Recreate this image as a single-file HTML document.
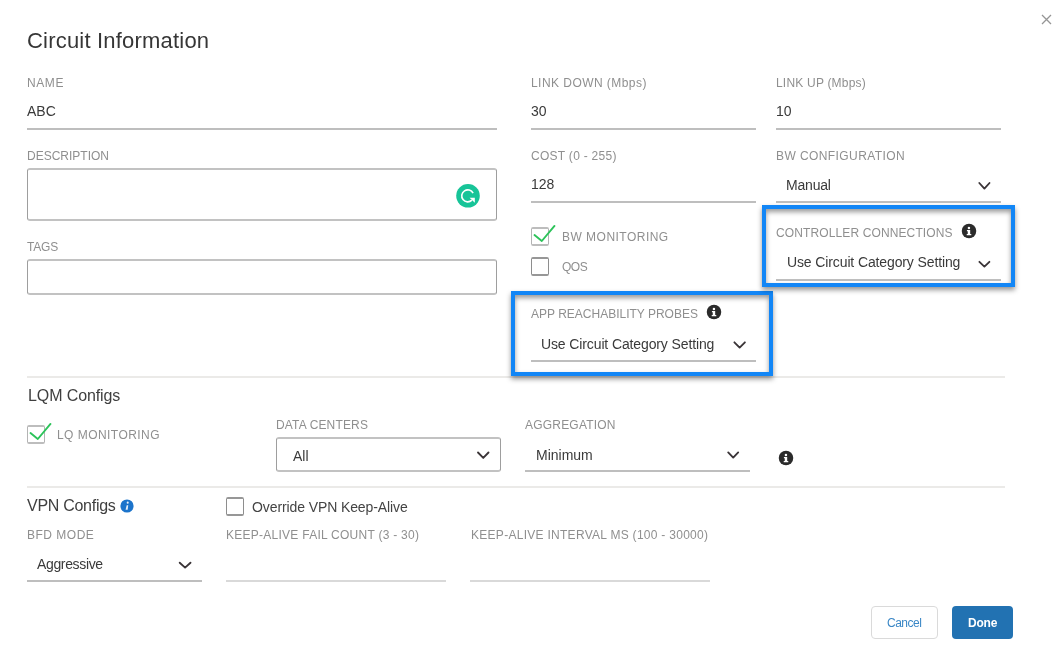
<!DOCTYPE html>
<html><head><meta charset="utf-8"><style>
html,body{margin:0;padding:0;background:#fff;width:1063px;height:657px;overflow:hidden}
body{position:relative;font-family:"Liberation Sans", sans-serif}
.t{position:absolute;white-space:pre;will-change:transform}
.r{position:absolute}
</style></head><body>
<svg class="r" style="left:1041px;top:13.5px" width="11" height="11" viewBox="0 0 11 11"><path d="M1 1 L10 10 M10 1 L1 10" stroke="#959595" stroke-width="1.3"/></svg>
<div class="t" style="left:27px;top:30px;font-size:22px;line-height:22px;color:#363636;letter-spacing:0.2px;font-weight:400;">Circuit Information</div>
<div class="t" style="left:27px;top:77px;font-size:12px;line-height:12px;color:#8f8f8f;letter-spacing:0.6px;font-weight:400;">NAME</div>
<div class="t" style="left:27px;top:104px;font-size:14px;line-height:14px;color:#3a3a3a;letter-spacing:0px;font-weight:400;">ABC</div>
<div class="r" style="left:27px;top:128px;width:470px;height:2px;background:#bebebe"></div>
<div class="t" style="left:27px;top:150px;font-size:12px;line-height:12px;color:#8f8f8f;letter-spacing:0px;font-weight:400;">DESCRIPTION</div>
<div class="r" style="left:27px;top:168px;width:470px;height:53px;border:1px solid #9e9e9e;border-top:2px solid #c2c2c2;border-bottom:2px solid #c2c2c2;border-radius:3px;box-sizing:border-box"></div>
<svg class="r" style="left:456px;top:184.2px" width="24" height="24" viewBox="0 0 24 24"><circle cx="12" cy="11.8" r="11.8" fill="#17c498"/><path d="M17.1 9.2 A6.0 6.0 0 1 0 15.9 16.2" fill="none" stroke="#fff" stroke-width="1.6"/><path d="M13.6 13.7 H18.8 V18.7 Z" fill="#fff"/></svg>
<div class="t" style="left:27px;top:241px;font-size:12px;line-height:12px;color:#8f8f8f;letter-spacing:-0.2px;font-weight:400;">TAGS</div>
<div class="r" style="left:27px;top:259px;width:470px;height:36px;border:1px solid #9e9e9e;border-top:2px solid #c2c2c2;border-bottom:2px solid #c2c2c2;border-radius:3px;box-sizing:border-box"></div>
<div class="t" style="left:531px;top:77px;font-size:12px;line-height:12px;color:#8f8f8f;letter-spacing:0.45px;font-weight:400;">LINK DOWN (Mbps)</div>
<div class="t" style="left:531px;top:104px;font-size:14px;line-height:14px;color:#3a3a3a;letter-spacing:0px;font-weight:400;">30</div>
<div class="r" style="left:531px;top:128px;width:225px;height:2px;background:#bebebe"></div>
<div class="t" style="left:776px;top:77px;font-size:12px;line-height:12px;color:#8f8f8f;letter-spacing:0.2px;font-weight:400;">LINK UP (Mbps)</div>
<div class="t" style="left:776px;top:104px;font-size:14px;line-height:14px;color:#3a3a3a;letter-spacing:0px;font-weight:400;">10</div>
<div class="r" style="left:776px;top:128px;width:225px;height:2px;background:#bebebe"></div>
<div class="t" style="left:531px;top:150px;font-size:12px;line-height:12px;color:#8f8f8f;letter-spacing:0.28px;font-weight:400;">COST (0 - 255)</div>
<div class="t" style="left:531px;top:177px;font-size:14px;line-height:14px;color:#3a3a3a;letter-spacing:0px;font-weight:400;">128</div>
<div class="r" style="left:531px;top:201px;width:225px;height:2px;background:#bebebe"></div>
<div class="t" style="left:776px;top:150px;font-size:12px;line-height:12px;color:#8f8f8f;letter-spacing:0.42px;font-weight:400;">BW CONFIGURATION</div>
<div class="t" style="left:786px;top:178px;font-size:14px;line-height:14px;color:#3a3a3a;letter-spacing:-0.2px;font-weight:400;">Manual</div>
<svg class="r" style="left:0;top:0" width="1063" height="657" viewBox="0 0 1063 657"><polyline points="979.3,183 984.4,188.6 989.5,183" fill="none" stroke="#3a3437" stroke-width="1.85" stroke-linecap="round" stroke-linejoin="round"/></svg>
<div class="r" style="left:776px;top:201px;width:225px;height:2px;background:#bebebe"></div>
<div class="r" style="left:531px;top:227px;width:18px;height:19px;border:1px solid #b4b4b4;border-top:2px solid #bdbdbd;border-bottom:2px solid #bdbdbd;border-radius:2px;box-sizing:border-box"></div>
<svg class="r" style="left:531px;top:223px" width="26" height="22" viewBox="0 0 26 22"><polyline points="3.5,12.1 10.8,18.0 23.5,2.9" fill="none" stroke="#2cc35a" stroke-width="1.9" stroke-linecap="round" stroke-linejoin="round"/></svg>
<div class="t" style="left:562px;top:231px;font-size:12px;line-height:12px;color:#8f8f8f;letter-spacing:0.48px;font-weight:400;">BW MONITORING</div>
<div class="r" style="left:531px;top:257px;width:18px;height:19px;border:1px solid #8e8e8e;border-top:2px solid #979797;border-bottom:2px solid #979797;border-radius:2px;box-sizing:border-box"></div>
<div class="t" style="left:562px;top:261px;font-size:12px;line-height:12px;color:#8f8f8f;letter-spacing:-0.5px;font-weight:400;">QOS</div>
<div class="r" style="left:762px;top:205px;width:253px;height:82px;border:4px solid #1286f6;box-sizing:border-box;box-shadow:0 3px 5px rgba(0,0,0,.42), inset 0 3px 5px rgba(0,0,0,.4);z-index:3"></div>
<div class="t" style="left:776px;top:227px;font-size:12px;line-height:12px;color:#8f8f8f;letter-spacing:0.12px;font-weight:400;">CONTROLLER CONNECTIONS</div>
<svg class="r" style="left:959.3px;top:221.2px;overflow:visible" width="20" height="20" viewBox="0 0 20 20"><circle cx="10" cy="10" r="7.25" fill="#2b2b2b"/><g transform="translate(2.75 2.75) scale(1.0357142857142858)"><circle cx="6.95" cy="4.05" r="1.2" fill="#fff"/><path d="M5.0 6.1 H8.15 V9.9 H9.2 V11.2 H4.8 V9.9 H5.8 V7.3 H5.0 Z" fill="#fff"/></g></svg>
<div class="t" style="left:786.5px;top:255px;font-size:14px;line-height:14px;color:#3a3a3a;letter-spacing:-0.12px;font-weight:400;">Use Circuit Category Setting</div>
<svg class="r" style="left:0;top:0" width="1063" height="657" viewBox="0 0 1063 657"><polyline points="979.4,261.8 984.4,266.6 989.4,261.8" fill="none" stroke="#3a3437" stroke-width="1.85" stroke-linecap="round" stroke-linejoin="round"/></svg>
<div class="r" style="left:776px;top:279px;width:225px;height:2px;background:#bebebe"></div>
<div class="r" style="left:511px;top:291px;width:262px;height:85px;border:4px solid #1286f6;box-sizing:border-box;box-shadow:0 3px 5px rgba(0,0,0,.42), inset 0 3px 5px rgba(0,0,0,.4);z-index:2"></div>
<div class="t" style="left:531px;top:308px;font-size:12px;line-height:12px;color:#8f8f8f;letter-spacing:0px;font-weight:400;">APP REACHABILITY PROBES</div>
<svg class="r" style="left:704.3px;top:302.2px;overflow:visible" width="20" height="20" viewBox="0 0 20 20"><circle cx="10" cy="10" r="7.25" fill="#2b2b2b"/><g transform="translate(2.75 2.75) scale(1.0357142857142858)"><circle cx="6.95" cy="4.05" r="1.2" fill="#fff"/><path d="M5.0 6.1 H8.15 V9.9 H9.2 V11.2 H4.8 V9.9 H5.8 V7.3 H5.0 Z" fill="#fff"/></g></svg>
<div class="t" style="left:541.4px;top:337px;font-size:14px;line-height:14px;color:#3a3a3a;letter-spacing:-0.12px;font-weight:400;">Use Circuit Category Setting</div>
<svg class="r" style="left:0;top:0" width="1063" height="657" viewBox="0 0 1063 657"><polyline points="734.4,342.3 739.65,347.6 744.9,342.3" fill="none" stroke="#3a3437" stroke-width="1.85" stroke-linecap="round" stroke-linejoin="round"/></svg>
<div class="r" style="left:531px;top:360px;width:225px;height:2px;background:#bebebe"></div>
<div class="r" style="left:27px;top:376px;width:978px;height:2px;background:#ebeae8"></div>
<div class="t" style="left:28px;top:388px;font-size:16px;line-height:16px;color:#3f3f3f;letter-spacing:-0.1px;font-weight:400;">LQM Configs</div>
<div class="r" style="left:27px;top:425px;width:18px;height:19px;border:1px solid #b4b4b4;border-top:2px solid #bdbdbd;border-bottom:2px solid #bdbdbd;border-radius:2px;box-sizing:border-box"></div>
<svg class="r" style="left:26.7px;top:421.4px" width="26" height="22" viewBox="0 0 26 22"><polyline points="3.5,12.1 10.8,18.0 23.5,2.9" fill="none" stroke="#2cc35a" stroke-width="1.9" stroke-linecap="round" stroke-linejoin="round"/></svg>

<div class="t" style="left:57px;top:429px;font-size:12px;line-height:12px;color:#8f8f8f;letter-spacing:0.45px;font-weight:400;">LQ MONITORING</div>
<div class="t" style="left:275.5px;top:419px;font-size:12px;line-height:12px;color:#8f8f8f;letter-spacing:0.15px;font-weight:400;">DATA CENTERS</div>
<div class="r" style="left:276px;top:437px;width:225px;height:35px;border:1px solid #9e9e9e;border-top:2px solid #c2c2c2;border-bottom:2px solid #c2c2c2;border-radius:3px;box-sizing:border-box"></div>
<div class="t" style="left:293px;top:448.5px;font-size:14px;line-height:14px;color:#3a3a3a;letter-spacing:0px;font-weight:400;">All</div>
<svg class="r" style="left:0;top:0" width="1063" height="657" viewBox="0 0 1063 657"><polyline points="478,452.5 483.25,457.90000000000003 488.5,452.5" fill="none" stroke="#3a3437" stroke-width="1.85" stroke-linecap="round" stroke-linejoin="round"/></svg>
<div class="t" style="left:525.4px;top:419px;font-size:12px;line-height:12px;color:#8f8f8f;letter-spacing:0.2px;font-weight:400;">AGGREGATION</div>
<div class="t" style="left:536.3px;top:447.5px;font-size:14px;line-height:14px;color:#3a3a3a;letter-spacing:0px;font-weight:400;">Minimum</div>
<svg class="r" style="left:0;top:0" width="1063" height="657" viewBox="0 0 1063 657"><polyline points="728.2,452.4 733.2,457.6 738.2,452.4" fill="none" stroke="#3a3437" stroke-width="1.85" stroke-linecap="round" stroke-linejoin="round"/></svg>
<div class="r" style="left:525px;top:470px;width:225px;height:2px;background:#bebebe"></div>
<svg class="r" style="left:775.7px;top:448.4px;overflow:visible" width="20" height="20" viewBox="0 0 20 20"><circle cx="10" cy="10" r="7.25" fill="#2b2b2b"/><g transform="translate(2.75 2.75) scale(1.0357142857142858)"><circle cx="6.95" cy="4.05" r="1.2" fill="#fff"/><path d="M5.0 6.1 H8.15 V9.9 H9.2 V11.2 H4.8 V9.9 H5.8 V7.3 H5.0 Z" fill="#fff"/></g></svg>
<div class="r" style="left:27px;top:486px;width:978px;height:2px;background:#ebeae8"></div>
<div class="t" style="left:27.4px;top:498px;font-size:16px;line-height:16px;color:#3f3f3f;letter-spacing:-0.28px;font-weight:400;">VPN Configs</div>
<svg class="r" style="left:117.45px;top:496px;overflow:visible" width="20" height="20" viewBox="0 0 20 20"><circle cx="10" cy="10" r="6.6" fill="#1c74cb"/><g transform="translate(3.4000000000000004 3.4000000000000004) scale(0.9428571428571428)"><circle cx="7.75" cy="3.45" r="1.1" fill="#e8f0f8"/><path d="M6.7 6.3 H8.3 L7.7 10.9 H5.5 Z" fill="#e8f0f8"/></g></svg>
<div class="r" style="left:226px;top:497px;width:18px;height:19px;border:1px solid #8e8e8e;border-top:2px solid #979797;border-bottom:2px solid #979797;border-radius:2px;box-sizing:border-box"></div>
<div class="t" style="left:251.6px;top:499.5px;font-size:14px;line-height:14px;color:#444;letter-spacing:-0.1px;font-weight:400;">Override VPN Keep-Alive</div>
<div class="t" style="left:26.5px;top:529px;font-size:12px;line-height:12px;color:#8f8f8f;letter-spacing:0.5px;font-weight:400;">BFD MODE</div>
<div class="t" style="left:226.3px;top:529px;font-size:12px;line-height:12px;color:#8f8f8f;letter-spacing:0.26px;font-weight:400;">KEEP-ALIVE FAIL COUNT (3 - 30)</div>
<div class="t" style="left:471px;top:529px;font-size:12px;line-height:12px;color:#8f8f8f;letter-spacing:0.28px;font-weight:400;">KEEP-ALIVE INTERVAL MS (100 - 30000)</div>
<div class="t" style="left:37.1px;top:557px;font-size:14px;line-height:14px;color:#3a3a3a;letter-spacing:-0.35px;font-weight:400;">Aggressive</div>
<svg class="r" style="left:0;top:0" width="1063" height="657" viewBox="0 0 1063 657"><polyline points="179.7,562.7 185.1,567.6 190.5,562.7" fill="none" stroke="#3a3437" stroke-width="1.85" stroke-linecap="round" stroke-linejoin="round"/></svg>
<div class="r" style="left:27px;top:580px;width:175px;height:2px;background:#bebebe"></div>
<div class="r" style="left:226px;top:580px;width:220px;height:2px;background:#d9d9d9"></div>
<div class="r" style="left:470px;top:580px;width:240px;height:2px;background:#d9d9d9"></div>
<div class="r" style="left:871px;top:606px;width:67px;height:33px;border:1px solid #dadada;border-radius:4px;box-sizing:border-box;background:#fff"></div>
<div class="t" style="left:887px;top:617px;font-size:12px;line-height:12px;color:#3a87c6;letter-spacing:-0.5px;font-weight:400;">Cancel</div>
<div class="r" style="left:952px;top:606px;width:61px;height:33px;border-radius:4px;background:#2272b2"></div>
<div class="t" style="left:968.4px;top:617px;font-size:12px;line-height:12px;color:#fff;letter-spacing:-0.2px;font-weight:700;">Done</div>
</body></html>
